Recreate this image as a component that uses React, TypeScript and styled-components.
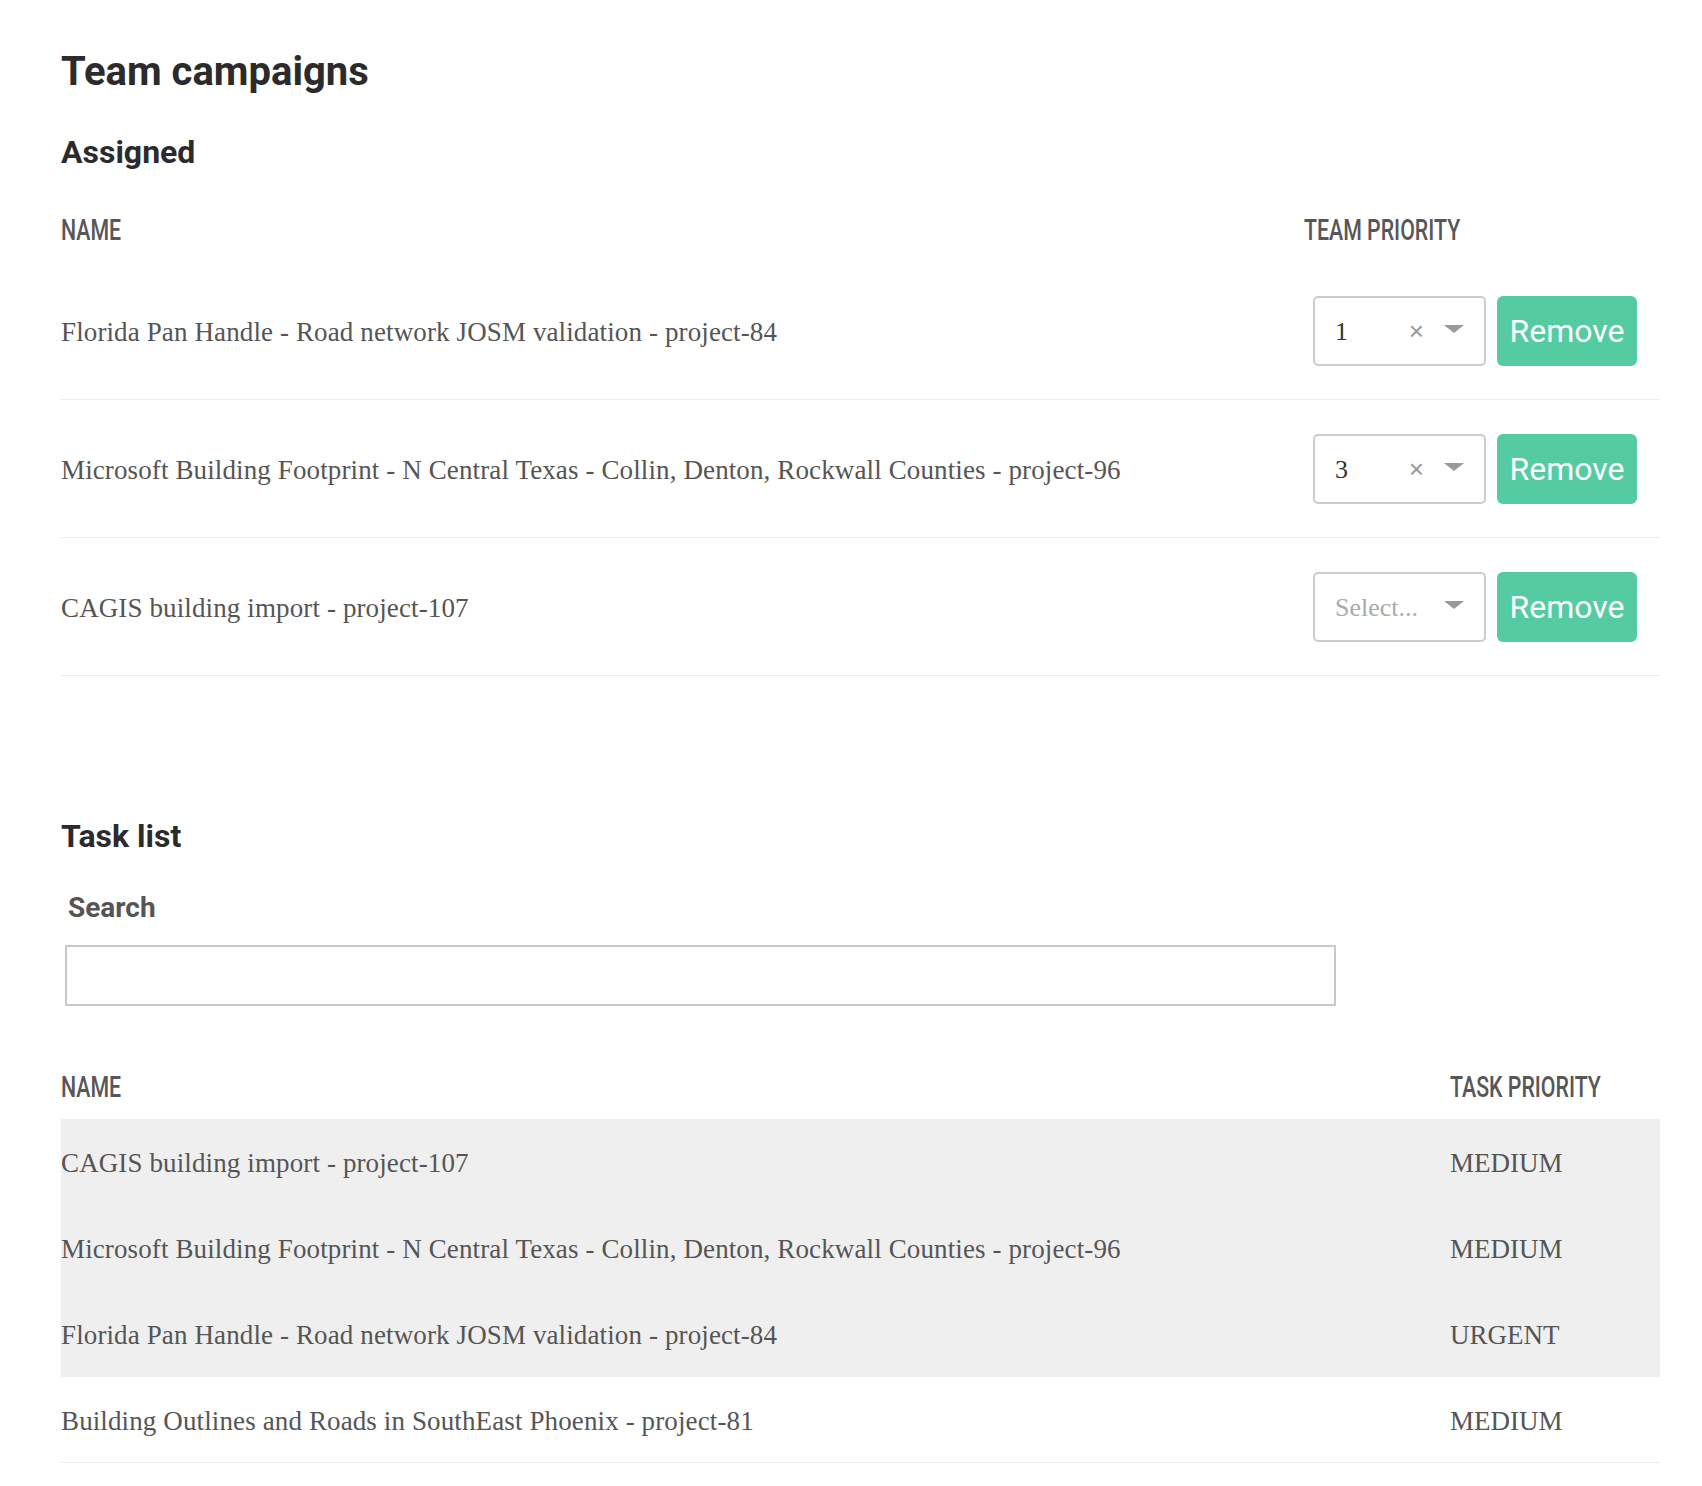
import React from "react";
import styled, { createGlobalStyle } from "styled-components";

const GlobalStyle = createGlobalStyle`
  html, body {
    margin: 0;
    padding: 0;
    background: #ffffff;
  }
  * { box-sizing: border-box; }
`;

const serif = `"Liberation Serif", "DejaVu Serif", serif`;
const sans = `Roboto, "Liberation Sans", sans-serif`;

const Page = styled.main`
  width: 1660px;
  padding: 48px 0 30px 61px;
  display: flex;
  flex-direction: column;
`;

const Title = styled.h1`
  margin: 0;
  font-family: ${sans};
  font-weight: 700;
  font-size: 40px;
  line-height: 48px;
  color: #2b2b2b;
`;

const SectionTitle = styled.h2<{ $top: number }>`
  margin: ${(p) => p.$top}px 0 0;
  font-family: ${sans};
  font-weight: 700;
  font-size: 32px;
  line-height: 38px;
  color: #2b2b2b;
`;

const HeaderRow = styled.div<{ $top: number; $priorityWidth: number }>`
  margin-top: ${(p) => p.$top}px;
  height: 64px;
  display: grid;
  grid-template-columns: 1fr ${(p) => p.$priorityWidth}px;
  align-items: center;
`;

const HeaderCell = styled.div`
  padding-left: 0;
  white-space: nowrap;
`;

/* condensed display face, approximated by horizontally compressing Roboto */
const HeaderLabel = styled.span`
  display: inline-block;
  font-family: ${sans};
  font-size: 29px;
  font-weight: 500;
  line-height: 34px;
  color: #575757;
  text-transform: uppercase;
  transform: scaleX(0.735);
  transform-origin: left center;
`;

const AssignedRow = styled.div`
  height: 138px;
  display: grid;
  grid-template-columns: 1fr 356px;
  align-items: center;
  border-bottom: 1px solid #ececec;
`;

const NameCell = styled.div`
  font-family: ${serif};
  font-size: 27px;
  letter-spacing: 0.12px;
  color: #555555;
  padding-top: 3px;
`;

const Controls = styled.div`
  display: flex;
  align-items: center;
  gap: 11px;
  padding-left: 9px;
`;

const SelectBox = styled.div`
  width: 173px;
  height: 70px;
  border: 2px solid #cccccc;
  border-radius: 5px;
  display: flex;
  align-items: center;
  padding: 0 20px 0 20px;
  background: #fff;
`;

const SelectValue = styled.span<{ $placeholder?: boolean }>`
  flex: 1;
  font-family: ${serif};
  font-size: 26px;
  padding-top: 3px;
  color: ${(p) => (p.$placeholder ? "#aaaaaa" : "#333333")};
`;

const ClearIcon = styled.span`
  font-family: "Liberation Sans", sans-serif;
  font-size: 26px;
  line-height: 1;
  color: #999999;
  margin-right: 20px;
`;

const Arrow = styled.span`
  width: 0;
  height: 0;
  border-style: solid;
  border-width: 8px 10px 0 10px;
  border-color: #999999 transparent transparent transparent;
  margin-top: -4px;
`;

const RemoveButton = styled.button`
  width: 140px;
  height: 70px;
  border: none;
  border-radius: 6px;
  background: #55cba2;
  color: #ffffff;
  font-family: ${sans};
  font-size: 32px;
  font-weight: 400;
  padding: 0;
  cursor: pointer;
`;

const SearchLabel = styled.label`
  margin-top: 37px;
  padding-left: 7px;
  font-family: ${sans};
  font-weight: 700;
  font-size: 28px;
  line-height: 32px;
  color: #555555;
`;

const SearchInput = styled.input`
  margin-top: 21px;
  margin-left: 4px;
  width: 1271px;
  height: 61px;
  border: 2px solid #c8c8c8;
  border-radius: 0;
  outline: none;
  font-family: ${serif};
  font-size: 24px;
  padding: 0 12px;
`;

const TaskRow = styled.div<{ $highlight?: boolean }>`
  height: 86px;
  display: grid;
  grid-template-columns: 1fr 210px;
  align-items: center;
  background: ${(p) => (p.$highlight ? "#efefef" : "#ffffff")};
  border-bottom: 1px solid ${(p) => (p.$highlight ? "#efefef" : "#ececec")};
`;

const PriorityCell = styled.div`
  font-family: ${serif};
  font-size: 27px;
  color: #555555;
  padding-top: 3px;
`;

const assigned = [
  { name: "Florida Pan Handle - Road network JOSM validation - project-84", value: "1" },
  {
    name: "Microsoft Building Footprint - N Central Texas - Collin, Denton, Rockwall Counties - project-96",
    value: "3",
  },
  { name: "CAGIS building import - project-107", value: "" },
];

const tasks = [
  { name: "CAGIS building import - project-107", priority: "MEDIUM", highlight: true },
  {
    name: "Microsoft Building Footprint - N Central Texas - Collin, Denton, Rockwall Counties - project-96",
    priority: "MEDIUM",
    highlight: true,
  },
  { name: "Florida Pan Handle - Road network JOSM validation - project-84", priority: "URGENT", highlight: true },
  { name: "Building Outlines and Roads in SouthEast Phoenix - project-81", priority: "MEDIUM", highlight: false },
];

export default function App() {
  return (
    <>
      <GlobalStyle />
      <Page>
        <Title>Team campaigns</Title>
        <SectionTitle $top={37}>Assigned</SectionTitle>
        <HeaderRow $top={27} $priorityWidth={356}>
          <HeaderCell>
            <HeaderLabel>Name</HeaderLabel>
          </HeaderCell>
          <HeaderCell>
            <HeaderLabel>Team priority</HeaderLabel>
          </HeaderCell>
        </HeaderRow>
        {assigned.map((row) => (
          <AssignedRow key={row.name}>
            <NameCell>{row.name}</NameCell>
            <Controls>
              <SelectBox>
                {row.value ? (
                  <>
                    <SelectValue>{row.value}</SelectValue>
                    <ClearIcon>×</ClearIcon>
                  </>
                ) : (
                  <SelectValue $placeholder>Select...</SelectValue>
                )}
                <Arrow />
              </SelectBox>
              <RemoveButton>Remove</RemoveButton>
            </Controls>
          </AssignedRow>
        ))}

        <SectionTitle $top={141}>Task list</SectionTitle>
        <SearchLabel htmlFor="search">Search</SearchLabel>
        <SearchInput id="search" type="text" />
        <HeaderRow $top={49} $priorityWidth={210}>
          <HeaderCell>
            <HeaderLabel>Name</HeaderLabel>
          </HeaderCell>
          <HeaderCell>
            <HeaderLabel>Task priority</HeaderLabel>
          </HeaderCell>
        </HeaderRow>
        {tasks.map((t) => (
          <TaskRow key={t.name} $highlight={t.highlight}>
            <NameCell>{t.name}</NameCell>
            <PriorityCell>{t.priority}</PriorityCell>
          </TaskRow>
        ))}
      </Page>
    </>
  );
}
